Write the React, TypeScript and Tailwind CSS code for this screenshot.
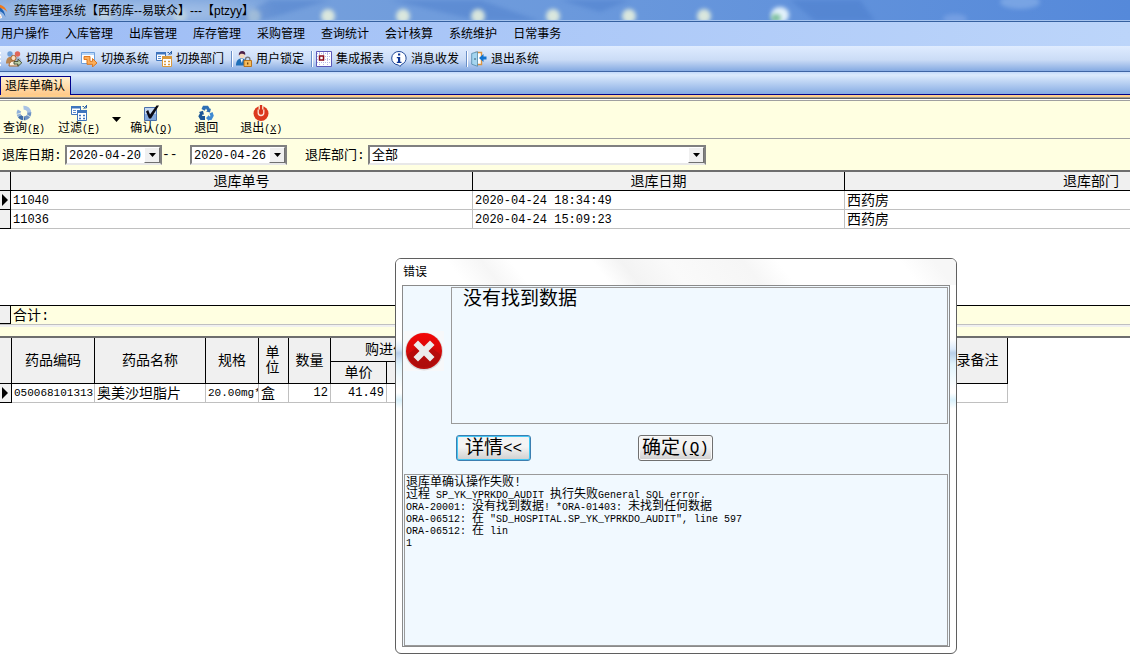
import type { ReactNode } from "react";

const menus = [
  "用户操作",
  "入库管理",
  "出库管理",
  "库存管理",
  "采购管理",
  "查询统计",
  "会计核算",
  "系统维护",
  "日常事务",
];

const orders = [
  { id: "11040", date: "2020-04-24 18:34:49", dept: "西药房" },
  { id: "11036", date: "2020-04-24 15:09:23", dept: "西药房" },
];

const glows = [105, 180, 254, 328, 403, 478, 553, 629, 704];

/* ---------- icons ---------- */

function AppIcon() {
  return (
    <svg width="16" height="16" viewBox="0 0 16 16" className="-ml-2 shrink-0">
      <path d="M5 1.5c5 0 8.500 2.500 10.500 8-1-2-4-4-7-4z" fill="#f07a1c" />
      <path d="M3 3.500c6 0 9.500 3.500 10.500 10.500C12 10 8 7.500 4 7z" fill="#1d62b5" />
      <path d="M3 8c4 .5 6.500 3 7 7-2 .8-5 .5-7-1z" fill="#fff" />
      <path d="M4 9.500c2.500.5 4 2 4.500 5H4z" fill="#e8702a" />
    </svg>
  );
}

function UsersIcon() {
  return (
    <svg width="16" height="16" viewBox="0 0 16 16">
      <circle cx="4" cy="3" r="2.700" fill="#6f9fd8" />
      <circle cx="11.500" cy="3" r="2.700" fill="#e0665a" />
      <path d="M0 12.500c0-4 1.500-6.500 4-6.500s4 2 4 6.500z" fill="#b98450" />
      <path d="M7.500 12c0-4 1.500-6 4-6s4 2 4 6z" fill="#9fb4d4" />
      <circle cx="7.500" cy="7" r="2.600" fill="#fbe0c4" stroke="#a5642c" />
      <path d="M3 15c0-3.500 1.800-5 4.500-5s4.500 1.500 4.500 5z" fill="#fbf0e0" stroke="#a5642c" />
      <path d="M8 10.500h4V8.200l3.800 3.600L12 15.300v-2.200H8z" fill="#b9cda6" stroke="#3f4a30" strokeWidth=".9" />
    </svg>
  );
}

function SystemIcon() {
  return (
    <svg width="16" height="16" viewBox="0 0 16 16">
      <path d="M.5 1.500h13v11H.5z" fill="#fff" stroke="#6d9fdc" />
      <path d="M1 2h12v2H1z" fill="#b8d6f7" />
      <path d="M3 5.500h6v4.800h2.500V7.500L16 12l-4.500 4v-2.700H6V8.500H3z" fill="#fbae5a" stroke="#dc6f12" strokeWidth=".9" />
    </svg>
  );
}

function DeptIcon({ tone }: { tone: string }) {
  return (
    <svg width="16" height="16" viewBox="0 0 16 16">
      <path d="M.5 1.500h9v8h-9z" fill="#fff" stroke="#3f75bd" />
      <path d="M0 1h10v2.500H0z" fill="#3f75bd" />
      <path d="M2 5.500h3M2 7.500h3" stroke="#5c8ccc" />
      <path d="M11.500 1.500H13M15.500 0v3H13M15.500.5L12.500 3.500" stroke="#2f62a8" fill="none" />
      <path d="M6.500 6.500h9v9h-9z" fill="#fff" stroke={tone} />
      <path d="M6 5h10v3H6z" fill={tone} />
      <path d="M8 10.500h2M12 10.500h2M8 13.500h2M12 13.500h2" stroke={tone} strokeWidth="1.400" />
    </svg>
  );
}

function LockUserIcon() {
  return (
    <svg width="16" height="16" viewBox="0 0 16 16">
      <path d="M0 14.500c0-4.500 2-7 5.500-7s5.500 2.500 5.500 7z" fill="#1f6fb8" />
      <path d="M4.500 8h2.500L5.800 12z" fill="#fff" />
      <circle cx="6" cy="4.500" r="2.800" fill="#f3d8bc" />
      <path d="M2.800 4.500C2.500 1.500 4 0 6.200 0s3.500 1.500 3 4C8 3 5 2.500 4.500 3z" fill="#4b2148" />
      <path d="M9.500 10V8.300a2.200 2.200 0 014.400 0V10" stroke="#777" strokeWidth="1.300" fill="none" />
      <path d="M8 9.500h7.500v6H8z" fill="#f6ba58" stroke="#b36b12" strokeWidth=".9" />
      <path d="M11.700 11.500v2" stroke="#6b3d05" strokeWidth="1.300" />
    </svg>
  );
}

function ReportIcon() {
  return (
    <svg width="16" height="16" viewBox="0 0 16 16">
      <path d="M.5.5h15v15H.5z" fill="#fff" stroke="#5b57b8" />
      <path d="M1 2.500h14M1 5.500h14M1 8.500h14M1 11.500h14M3.500 1v14M7.500 1v14M11.500 1v14" stroke="#b9b8e6" strokeDasharray="1 1" />
      <path d="M3.500 5h4v4h-4z" fill="#fff" stroke="#8d0d1c" strokeWidth="1.500" />
    </svg>
  );
}

function InfoIcon() {
  return (
    <svg width="16" height="16" viewBox="0 0 16 16">
      <path d="M8 .5a7 6.700 0 012.500 13L9 15.500 7.500 14A7 6.700 0 018 .5z" fill="#fff" stroke="#1f4796" />
      <path d="M7 2.500h2.200v2H7zM5.800 6h3.400v4.700h1.300V12H5.800v-1.300H7V7.300H5.800z" fill="#0c3594" />
    </svg>
  );
}

function LeaveIcon() {
  return (
    <svg width="16" height="16" viewBox="0 0 16 16">
      <path d="M5 1.500h5.500v12H5z" fill="#fff" stroke="#d89443" strokeWidth="1.400" />
      <path d="M.7 2.500L6.500.7v14.600L.7 13.200z" fill="#a5d5ef" stroke="#4f87a8" strokeWidth=".8" />
      <path d="M4 7v2" stroke="#365d75" />
      <path d="M15.500 5.500h-3V3L8 7l4.500 4V8.500h3z" fill="#1173d0" />
    </svg>
  );
}

function QueryIcon() {
  return (
    <svg width="16" height="16" viewBox="0 0 16 16" fill="none" strokeWidth="4">
      <path d="M7.500 2.700A5.300 5.300 0 0113.300 8" stroke="#a9c3e4" />
      <path d="M13.300 7.500A5.300 5.300 0 019 13.200" stroke="#6d92c4" />
      <path d="M9 13.200A5.300 5.300 0 013.500 11" stroke="#3f6ba6" />
      <path d="M3.500 11c-1.200-2-1-4 0-5.500" stroke="#8fb0da" />
      <path d="M0 9.500l5.500-1.500M7.500 10.500v5.500M10.500 9.500l4 2.500" stroke="#ffffe1" strokeWidth=".7" />
    </svg>
  );
}

function CheckIcon() {
  return (
    <svg width="16" height="16" viewBox="0 0 16 16">
      <path d="M1.500 2.500h12v13h-12z" fill="#c3d7f1" stroke="#4a70ab" />
      <path d="M2 9h11v6H2z" fill="#82a8dc" />
      <path d="M3 6.500L5.200 5l1.800 4.500L13.500.5H16L8 13.500H6z" fill="#0a0a14" />
    </svg>
  );
}

function RecycleIcon() {
  return (
    <svg width="16" height="16" viewBox="0 0 16 16">
      <path d="M5 .8h5l2 3.200 1-.5-1 4-4-1 1.300-.8L8 3.500 6.700 5.700 3.500 4z" fill="#2d6fb5" />
      <path d="M1 7l4-1.200L6 9.800l-1.200-.5L4 11h3v4H2.500L.3 11.200l1.700-3z" fill="#1b5796" />
      <path d="M11.500 8.500L14.500 7l1.300 3.800L13.500 15H11v1.200L8 13l3-3v1.200h1.500z" fill="#3f8ad2" />
    </svg>
  );
}

function PowerIcon() {
  return (
    <svg width="16" height="16" viewBox="0 0 16 16">
      <circle cx="8" cy="8.500" r="7.500" fill="#dc3a1e" />
      <path d="M5.200 4.500v3.200a2.800 2.800 0 005.600 0V4.500" stroke="#fbe3da" strokeWidth="1.300" fill="none" />
      <path d="M5.600 0h4.800v4.500H5.600z" fill="#ffffe1" />
      <path d="M6.800 0h2.400v7.500H6.800z" fill="#d8341c" />
    </svg>
  );
}

function ErrorIcon() {
  return (
    <svg width="40" height="40" viewBox="0 0 40 40">
      <defs>
        <linearGradient id="err" x1="0" y1="0" x2="0" y2="1">
          <stop offset="0" stopColor="#f40606" />
          <stop offset="1" stopColor="#b30d0d" />
        </linearGradient>
      </defs>
      <path d="M0 0h40v40H0z" fill="#f7f8fa" />
      <circle cx="20" cy="20.500" r="19" fill="#d9d9dc" />
      <circle cx="20" cy="20" r="18" fill="url(#err)" />
      <path d="M3 24L12 17h16l9 7a18 18 0 01-34 0z" fill="#a00c0c" opacity=".5" />
      <path d="M14 9.500l6 6 6-6 4.500 4.500-6 6 6 6-4.500 4.500-6-6-6 6L9.500 26l6-6-6-6z" fill="#ececec" />
    </svg>
  );
}

function DownArrow() {
  return (
    <svg width="9" height="5" viewBox="0 0 9 5">
      <path d="M0 0h9L4.500 5z" fill="#000" />
    </svg>
  );
}

function SmallArrow() {
  return (
    <svg width="7" height="4" viewBox="0 0 7 4">
      <path d="M0 0h7L3.500 4z" fill="#000" />
    </svg>
  );
}

function RowPointer() {
  return (
    <svg width="6" height="12" viewBox="0 0 6 12" className="ml-[2px]">
      <path d="M0 0l6 6-6 6z" fill="#000" />
    </svg>
  );
}

/* ---------- pieces ---------- */

// latin letters are half as wide as a 12px chinese glyph
function Half({ children }: { children: ReactNode }) {
  return <span className="text-[10px]">{children}</span>;
}

function BarButton({ icon, children }: { icon: ReactNode; children: ReactNode }) {
  return (
    <button type="button" className="flex h-6 shrink-0 items-center gap-1 pr-1 pl-[3px]">
      {icon}
      {children}
    </button>
  );
}

function Divider() {
  return <div className="ml-[3px] h-4 w-[2px] border-l border-[#6a8fc7] bg-white" />;
}

function ToolButton({ icon, label, hotkey }: { icon: ReactNode; label: string; hotkey?: string }) {
  return (
    <button type="button" className="flex shrink-0 flex-col items-center gap-px leading-[14px]">
      {icon}
      <span className="whitespace-nowrap">
        {label}
        {hotkey && (
          <Half>
            (<u>{hotkey}</u>)
          </Half>
        )}
      </span>
    </button>
  );
}

function DateField({ id, value, label }: { id: string; value: string; label: string }) {
  return (
    <div className="flex h-5 w-[97px] border-2 border-t-[#808080] border-r-[#808080] border-b-[#e8e8e8] border-l-[#808080] bg-white">
      <input
        id={id}
        aria-label={label}
        defaultValue={value}
        className="w-0 flex-1 pt-px pl-[2px] font-['Liberation_Mono',monospace] text-xs outline-none"
      />
      <button
        type="button"
        aria-label="选择日期"
        className="flex w-4 items-center justify-center border border-t-white border-r-[#707070] border-b-[#707070] border-l-white bg-[#f0f0f0]"
      >
        <SmallArrow />
      </button>
    </div>
  );
}

function OrderGrid() {
  const head = "border-r border-b border-black p-0 pt-[2px] font-normal";
  const cell = "border-r border-b border-[#c0c0c0] p-0 pl-[2px]";

  return (
    <div className="h-[135px] overflow-hidden border-t-2 border-[#6e6e6e] bg-white">
      <table className="w-[1338px] table-fixed border-separate border-spacing-0 text-sm leading-[16px]">
        <colgroup>
          <col className="w-[11px]" />
          <col className="w-[462px]" />
          <col className="w-[372px]" />
          <col />
        </colgroup>
        <thead>
          <tr className="h-[19px] bg-[#f0f0f0]">
            <th className={head} />
            <th className={head}>退库单号</th>
            <th className={head}>退库日期</th>
            <th className={head}>退库部门</th>
          </tr>
        </thead>
        <tbody>
          {orders.map((order, i) => (
            <tr key={order.id} className="h-[19px]">
              <td className="border-r border-b border-black bg-[#f0f0f0] p-0">{i === 0 && <RowPointer />}</td>
              <td className={`${cell} pt-[2px] text-xs leading-[16px]`}>{order.id}</td>
              <td className={`${cell} pt-[2px] text-xs leading-[16px]`}>{order.date}</td>
              <td className={`${cell} pt-[2px]`}>{order.dept}</td>
            </tr>
          ))}
        </tbody>
      </table>
    </div>
  );
}

function DrugGrid() {
  const head = "border-r border-b border-black p-0 font-normal";
  const cell = "overflow-hidden border-r border-b border-[#c0c0c0] p-0 px-[2px] whitespace-nowrap";

  return (
    <div className="overflow-hidden border-t-2 border-[#6e6e6e] bg-white">
      <table className="w-[1008px] table-fixed border-separate border-spacing-0 text-sm leading-[18px]">
        <colgroup>
          <col className="w-[12px]" />
          <col className="w-[83px]" />
          <col className="w-[111px]" />
          <col className="w-[53px]" />
          <col className="w-[30px]" />
          <col className="w-[42px]" />
          <col className="w-[56px]" />
          <col className="w-[69px]" />
          <col />
          <col className="w-[74px]" />
        </colgroup>
        <thead className="bg-[#f0f0f0]">
          <tr className="h-[24px]">
            <th rowSpan={2} className={head} />
            <th rowSpan={2} className={head}>药品编码</th>
            <th rowSpan={2} className={head}>药品名称</th>
            <th rowSpan={2} className={head}>规格</th>
            <th rowSpan={2} className="border-r border-b border-black p-0 pr-2 pl-[6px] leading-[15px] font-normal">
              单位
            </th>
            <th rowSpan={2} className={head}>数量</th>
            <th colSpan={2} className={head}>购进价格</th>
            <th rowSpan={2} className={head} />
            <th rowSpan={2} className={head}>目录备注</th>
          </tr>
          <tr className="h-[22px]">
            <th className={head}>单价</th>
            <th className={head}>金额</th>
          </tr>
        </thead>
        <tbody>
          <tr className="h-[19px]">
            <td className="border-r border-b border-black bg-[#f0f0f0] p-0">
              <RowPointer />
            </td>
            <td className={`${cell} text-[11px] leading-[18px]`}>050068101313</td>
            <td className={`${cell} pt-[2px] leading-[16px]`}>奥美沙坦脂片</td>
            <td className={`${cell} text-[11px] leading-[18px]`}>20.00mg*</td>
            <td className={`${cell} pt-[2px] leading-[16px]`}>盒</td>
            <td className={`${cell} text-right text-xs leading-[18px]`}>12</td>
            <td className={`${cell} text-right text-xs leading-[18px]`}>41.49</td>
            <td className={cell} />
            <td className={cell} />
            <td className={cell} />
          </tr>
        </tbody>
      </table>
    </div>
  );
}

function ErrorDialog() {
  return (
    <div
      role="alertdialog"
      aria-labelledby="error-title"
      className="absolute top-[258px] left-[395px] w-[562px] overflow-hidden rounded-md border border-[#5f5f5f] bg-[linear-gradient(#fff_0,#fff_80px,#dceafa_90px,#b9cfea_94px,#e0f3fc_105px,#fff_130px,#fff_134px,#d9f1fb_141px,#fff_150px)] px-[6px] pb-[6px]"
    >
      <h2
        id="error-title"
        className="-mx-[6px] h-[26px] bg-[linear-gradient(52deg,#fff_0,#fff_12%,#f6f6f6_18%,#fff_23%,#fff_37%,#f3f3f3_42%,#fafafa_50%,#f6f6f6_63%,#fff_69%,#fff_90%,#f7f7f7_96%)] pl-[7px] font-['Liberation_Sans','Noto_Sans_CJK_SC',sans-serif] text-xs leading-[26px]"
      >
        错误
      </h2>
      <div className="border border-[#8a8a8a] bg-[#f1f9ff] px-px pt-px">
        <div className="flex">
          <div className="flex w-[47px] shrink-0 items-start pt-11">
            <ErrorIcon />
          </div>
          <textarea
            readOnly
            aria-label="错误信息"
            defaultValue="没有找到数据"
            className="h-[137px] flex-1 resize-none border border-[#9a9a9a] pl-[11px] text-[19px] leading-6 outline-none"
          />
        </div>
        <div className="flex gap-[107px] pt-[11px] pb-[13px] pl-[52px] text-[19px] leading-6">
          <button
            type="button"
            className="flex h-[26px] w-[75px] items-center justify-center rounded-[3px] border border-[#3c7fb1] bg-linear-to-b from-[#f4f4f4] from-45% to-[#cfcfcf] pt-[2px] inset-ring inset-ring-[#43c8f5]"
          >
            详情<span className="text-base">&lt;&lt;</span>
          </button>
          <button
            type="button"
            className="flex h-[26px] w-[75px] items-center justify-center rounded-[3px] border border-[#707070] bg-linear-to-b from-[#f4f4f4] from-45% to-[#cfcfcf] pt-[2px] inset-ring inset-ring-[#fafafa]"
          >
            确定<span className="text-base">(<u>Q</u>)</span>
          </button>
        </div>
        <div className="grid h-[172px] auto-rows-[12px] border border-[#9a9a9a] pt-[2px] pl-px text-xs leading-[12px] whitespace-nowrap">
          <p>退库单确认操作失败!</p>
          <p>过程<Half> SP_YK_YPRKDO_AUDIT </Half>执行失败<Half>General SQL error.</Half></p>
          <p>
            <Half>ORA-20001: </Half>没有找到数据<Half>! *ORA-01403: </Half>未找到任何数据
          </p>
          <p>
            <Half>ORA-06512: </Half>在<Half> "SD_HOSPITAL.SP_YK_YPRKDO_AUDIT", line 597</Half>
          </p>
          <p><Half>ORA-06512: </Half>在<Half> lin</Half></p>
          <p><Half>1</Half></p>
        </div>
      </div>
    </div>
  );
}

export default function App() {
  return (
    <div className="relative min-h-screen overflow-hidden bg-white font-['Liberation_Mono','Noto_Sans_CJK_SC',monospace] text-xs text-black">
      <div className="font-['Liberation_Sans','Noto_Sans_CJK_SC',sans-serif]">
        {/* Title bar */}
        <header className="relative h-[22px] overflow-hidden border-b border-[#35609f] bg-linear-to-r from-[#7fa6dc] via-[#6b99dc] to-[#5589da]">
          <svg className="absolute inset-0" width="100%" height="21" aria-hidden="true">
            <defs>
              <filter id="soft" x="-50%" y="-50%" width="200%" height="200%">
                <feGaussianBlur stdDeviation="2" />
              </filter>
              <filter id="wide" x="-50%" y="-50%" width="200%" height="200%">
                <feGaussianBlur stdDeviation="8" />
              </filter>
            </defs>
            <ellipse cx="120" cy="12" rx="150" ry="9" fill="#c0d4ee" opacity=".75" filter="url(#wide)" />
            <path d="M270 0h60l-70 21h-30zM390 0h90l60 21h-60zM560 0h70l-30 12zM790 0h70l15 21h-60z" fill="#3f72c4" opacity=".35" filter="url(#soft)" />
            <ellipse cx="1020" cy="2" rx="20" ry="7" fill="#8db4ea" opacity=".6" filter="url(#soft)" />
            <ellipse cx="955" cy="19" rx="12" ry="5" fill="#7fa6e6" opacity=".7" filter="url(#soft)" />
            {glows.map((x) => (
              <ellipse key={x} cx={x} cy="16" rx="7" ry="7" fill="#e6f0de" opacity={x < 300 ? 0.4 : 0.9} filter="url(#soft)" />
            ))}
            <ellipse cx="780" cy="15" rx="9" ry="8" fill="#e3f2fb" filter="url(#soft)" />
            <ellipse cx="776" cy="18" rx="5" ry="4" fill="#7cbf9c" filter="url(#soft)" />
            <path d="M0 20.500h3000" stroke="#a5c3ee" />
          </svg>
          <h1 className="relative flex h-[21px] items-center gap-[6px] whitespace-nowrap">
            <AppIcon />
            药库管理系统【西药库--易联众】---【ptzyy】
          </h1>
        </header>

        {/* Menu */}
        <nav className="flex h-6 items-center gap-4 bg-linear-to-r from-[#9dbcf5] to-[#bcd5fa] pl-px">
          {menus.map((menu) => (
            <button key={menu} type="button" className="shrink-0">
              {menu}
            </button>
          ))}
        </nav>

        {/* Shortcuts */}
        <div className="flex h-[26px] items-center border-b border-[#3f66a5] bg-[linear-gradient(#dfecff,#cbdcf6_55%,#85aae2)]">
          <div className="mr-[2px] h-[14px] w-px bg-[repeating-linear-gradient(#fff_0_2px,transparent_2px_4px)]" />
          <BarButton icon={<UsersIcon />}>切换用户</BarButton>
          <BarButton icon={<SystemIcon />}>切换系统</BarButton>
          <BarButton icon={<DeptIcon tone="#d99a3d" />}>切换部门</BarButton>
          <Divider />
          <BarButton icon={<LockUserIcon />}>用户锁定</BarButton>
          <Divider />
          <BarButton icon={<ReportIcon />}>集成报表</BarButton>
          <BarButton icon={<InfoIcon />}>消息收发</BarButton>
          <Divider />
          <BarButton icon={<LeaveIcon />}>退出系统</BarButton>
        </div>
      </div>

      {/* Tabs */}
      <div className="flex h-[23px] items-end border-b border-[#00008b] bg-[linear-gradient(#c3dafb,#dcebfd_3px,#87ace3)]">
        <button
          type="button"
          className="-mb-px h-[19px] border border-b-0 border-[#00008b] bg-linear-to-b from-[#fff0cf] to-[#ffc989] pt-px pr-[5px] pl-1 leading-[18px]"
        >
          退库单确认
        </button>
      </div>
      <div className="h-[6px] bg-[linear-gradient(#ffcf8b_2px,#a09a94_2px,#a09a94_3px,#5f5f5f_3px,#5f5f5f_4px,#fff_4px,#fff_5px,#a0a0a0_5px)]" />

      {/* Actions */}
      <div className="flex h-[38px] items-start border-b border-[#a0a0a0] bg-[#ffffe1] pt-1 pl-[3px]">
        <ToolButton icon={<QueryIcon />} label="查询" hotkey="R" />
        <div className="ml-[13px] flex">
          <ToolButton icon={<DeptIcon tone="#3f75bd" />} label="过滤" hotkey="F" />
          <button type="button" aria-label="过滤选项" className="ml-3 h-7">
            <DownArrow />
          </button>
        </div>
        <div className="ml-[9px] flex gap-[22px]">
          <ToolButton icon={<CheckIcon />} label="确认" hotkey="Q" />
          <ToolButton icon={<RecycleIcon />} label="退回" />
          <ToolButton icon={<PowerIcon />} label="退出" hotkey="X" />
        </div>
      </div>

      {/* Filter */}
      <div className="flex h-[31px] items-center bg-[#ffffe1] pt-px pl-[2px] text-[13px]">
        <label htmlFor="date-from" className="w-[63px] shrink-0 pt-[2px]">退库日期:</label>
        <DateField id="date-from" value="2020-04-20" label="退库日期 起" />
        <span className="w-[28px]">--</span>
        <DateField id="date-to" value="2020-04-26" label="退库日期 止" />
        <label htmlFor="dept" className="ml-[18px] w-[63px] shrink-0 pt-[2px]">退库部门:</label>
        <div className="relative h-5 w-[338px] border-2 border-t-[#808080] border-r-[#808080] border-b-[#e8e8e8] border-l-[#808080] bg-white">
          <select id="dept" className="block h-full w-full appearance-none pt-px pl-[2px] leading-4 outline-none">
            <option>全部</option>
          </select>
          <span className="pointer-events-none absolute inset-y-0 right-0 flex w-4 items-center justify-center border border-t-white border-r-[#707070] border-b-[#707070] border-l-white bg-[#f0f0f0]">
            <SmallArrow />
          </span>
        </div>
      </div>

      <OrderGrid />

      {/* Totals */}
      <div className="flex h-5 border-t border-b border-t-black border-b-[#c0c0c0] bg-[#ffffe1] text-sm leading-[18px]">
        <div className="w-[11px] border-r border-b border-black bg-[#f0f0f0]" />
        <span className="pt-px pl-[2px]">合计:</span>
      </div>
      <div className="h-[11px] border-t-2 border-[#f0f0f0] bg-[#ffffe1]" />

      <DrugGrid />

      <ErrorDialog />
    </div>
  );
}
